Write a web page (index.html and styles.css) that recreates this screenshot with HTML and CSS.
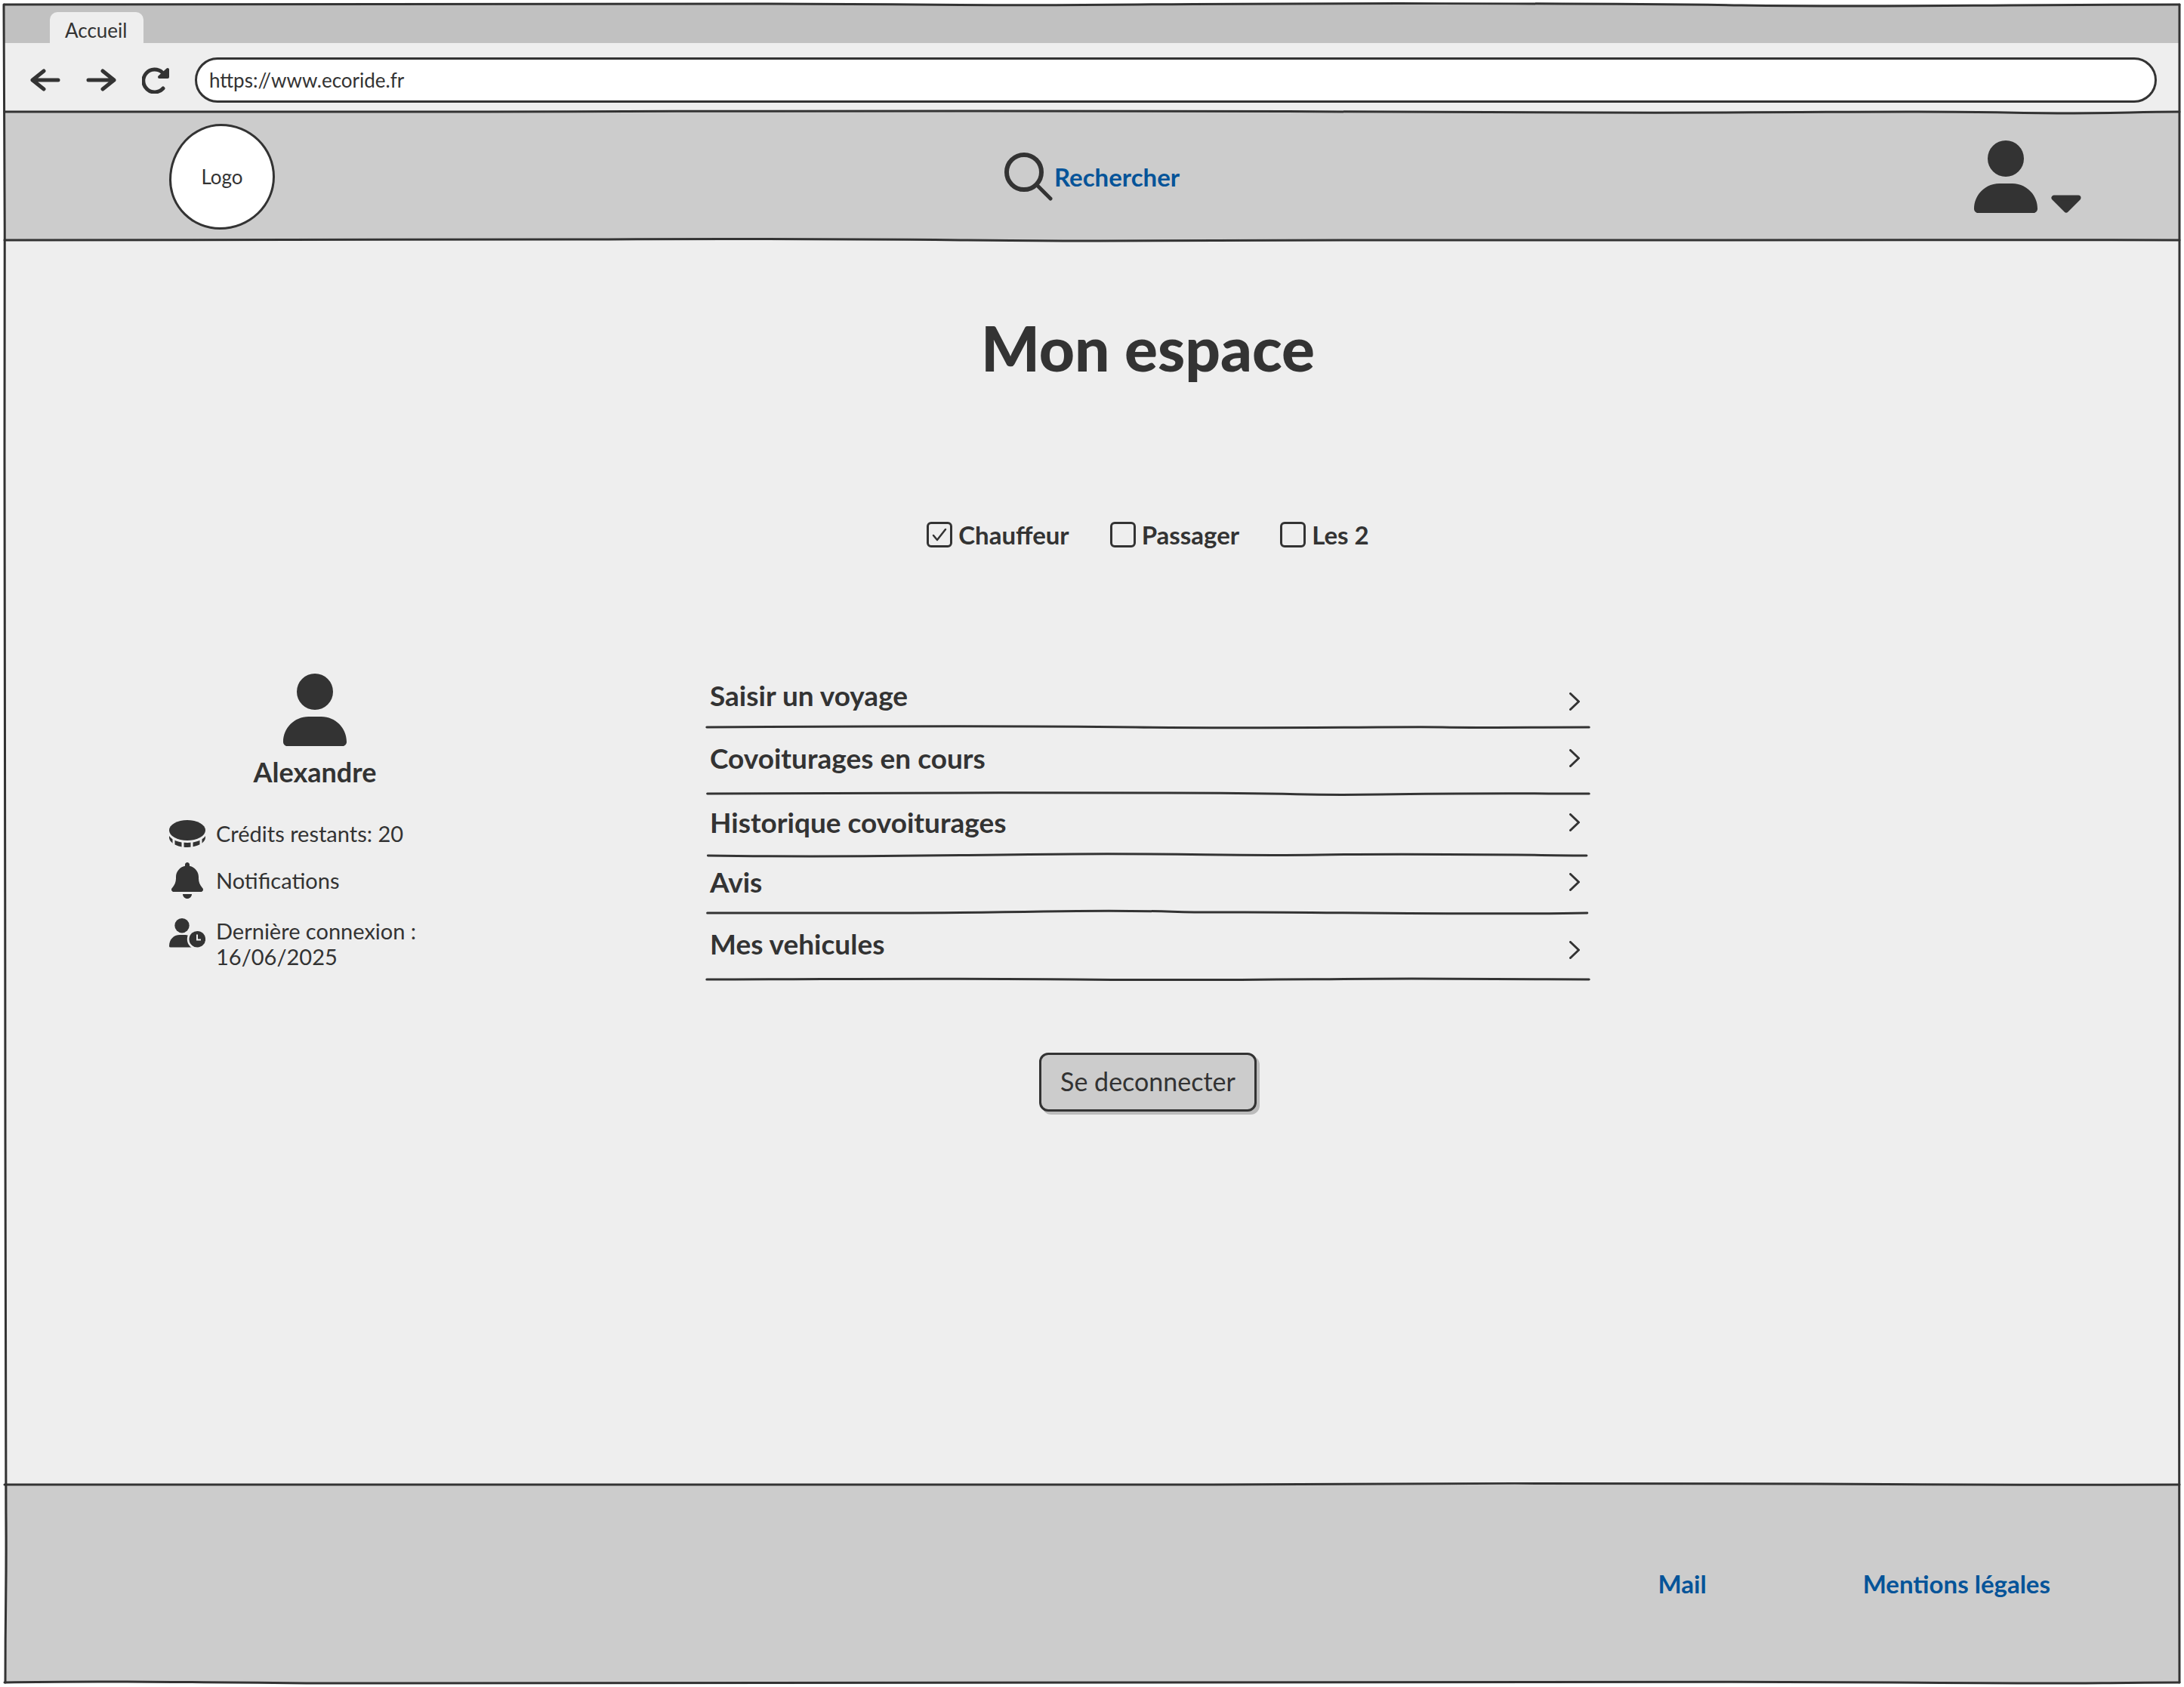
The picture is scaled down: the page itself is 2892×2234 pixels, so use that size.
FILE: index.html
```html
<!DOCTYPE html>
<html lang="fr">
<head>
<meta charset="utf-8">
<title>Mon espace</title>
<link rel="stylesheet" href="styles.css">
</head>
<body>
<svg class="defs" aria-hidden="true">
  <symbol id="user" viewBox="0 0 448 512"><path d="M224 256A128 128 0 1 0 224 0a128 128 0 1 0 0 256zm-45.700 48C79.800 304 0 383.800 0 482.300C0 498.700 13.300 512 29.700 512H418.300c16.400 0 29.700-13.300 29.700-29.700C448 383.800 368.200 304 269.700 304H178.300z"/></symbol>
  <symbol id="chevron" viewBox="0 0 14 24"><path d="M1.500 1.500L12.500 12L1.500 22.500" fill="none" stroke="currentColor" stroke-width="3" stroke-linecap="round" stroke-linejoin="round"/></symbol>
</svg>
<div class="window">
  <div class="tabs"><button class="tab" type="button">Accueil</button></div>
  <div class="toolbar">
    <button class="icon-button" type="button" aria-label="Précédent"><svg width="40" height="30" viewBox="0 0 40 30"><path class="stroke" d="M37 15H3M18 3L3 15L18 27"/></svg></button>
    <button class="icon-button" type="button" aria-label="Suivant"><svg width="40" height="30" viewBox="0 0 40 30"><path class="stroke" d="M3 15H37M22 3L37 15L22 27"/></svg></button>
    <button class="icon-button" type="button" aria-label="Actualiser"><svg width="36" height="36" viewBox="0 0 36 36"><path class="stroke" d="M28 29A15 15 0 1 1 27 8"/><path d="M34 4V14H23Z" stroke="currentColor" stroke-width="4" stroke-linejoin="round"/></svg></button>
    <input class="address" type="text" aria-label="Adresse" value="https://www.ecoride.fr">
  </div>
  <header class="header">
    <svg class="rule rule--top" viewBox="0 0 2880 10" preserveAspectRatio="none"><path d="M0 5C200 7 400 6 640 5S1000 4 1300 4S1800 5 2100 6S2500 3 2650 6S2800 5 2880 5"/></svg>
    <a class="logo" href="#">Logo</a>
    <a class="search" href="#"><svg width="64" height="64" viewBox="0 0 64 64"><circle class="ring" cx="26" cy="26" r="23"/><path class="stroke" d="M44 44L61 61"/></svg>Rechercher</a>
    <button class="icon-button account" type="button" aria-label="Compte"><svg width="84" height="96"><use href="#user"/></svg><svg width="40" height="24" viewBox="0 0 40 24"><path d="M4 4H36L20 20Z" stroke="currentColor" stroke-width="7" stroke-linejoin="round"/></svg></button>
    <svg class="rule rule--bottom" viewBox="0 0 2880 10" preserveAspectRatio="none"><path d="M0 5C200 3 500 6 800 4S1300 6 1450 6S1900 4 2100 5S2600 4 2880 5"/></svg>
  </header>
  <main class="main">
    <h1 class="title">Mon espace</h1>
    <div class="roles">
      <label class="role"><input type="checkbox" checked>Chauffeur</label>
      <label class="role"><input type="checkbox">Passager</label>
      <label class="role"><input type="checkbox">Les 2</label>
    </div>
    <aside class="profile">
      <div class="identity"><svg width="84" height="96"><use href="#user"/></svg><strong class="name">Alexandre</strong></div>
      <ul class="facts">
        <li class="fact"><svg width="48" height="36" viewBox="0 0 48 36"><ellipse cx="24" cy="13.500" rx="24" ry="13.500"/><path d="M0 21C4 27 14 30 24 30S44 27 48 21V23C48 30 37 36 24 36S0 30 0 23Z"/><path class="cut" d="M6 24V36M18 28V37M30 28V37M42 24V36"/></svg>Crédits restants: 20</li>
        <li class="fact"><svg width="48" height="48" viewBox="-32 0 512 512"><path d="M224 0c-17.700 0-32 14.300-32 32V51.200C119 66 64 130.600 64 208v18.800c0 47-17.300 92.400-48.500 127.600l-7.400 8.300c-8.400 9.400-10.400 22.900-5.300 34.400S19.400 416 32 416H416c12.600 0 24-7.400 29.200-18.900s3.100-25-5.300-34.400l-7.400-8.300C401.300 319.200 384 273.900 384 226.800V208c0-77.400-55-142-128-156.800V32c0-17.700-14.300-32-32-32zm45.300 493.300c12-12 18.700-28.300 18.700-45.300H160c0 17 6.700 33.300 18.700 45.300s28.300 18.700 45.300 18.700s33.300-6.700 45.300-18.700z"/></svg>Notifications</li>
        <li class="fact fact--top"><svg width="48" height="39" viewBox="0 0 48 39"><circle cx="17" cy="9.700" r="9.700"/><path d="M0 37C0 28 6 22 14 22H20C26 22 34 26 34 36V38.500H2Q0 38.500 0 37Z"/><circle class="cut" cx="37.300" cy="27.700" r="12"/><circle cx="37.300" cy="27.700" r="10.800"/><path class="hand" d="M37 21.500V28.500H42"/></svg><span>Dernière connexion :<br>16/06/2025</span></li>
      </ul>
    </aside>
    <div class="content">
      <nav>
        <ul class="menu">
          <li class="item item--first item--low"><a href="#">Saisir un voyage<svg width="14" height="24"><use href="#chevron"/></svg></a><svg class="rule rule--bottom" viewBox="0 0 2880 10" preserveAspectRatio="none"><path d="M2 5C400 4 1000 3 1400 5S2300 4 2400 5S2700 5 2878 5"/></svg></li>
          <li class="item item--tall"><a href="#">Covoiturages en cours<svg width="14" height="24"><use href="#chevron"/></svg></a><svg class="rule rule--bottom" viewBox="0 0 2880 10" preserveAspectRatio="none"><path d="M4 5C300 3 1000 4 1500 4S1900 8 2200 6S2700 5 2878 5"/></svg></li>
          <li class="item"><a href="#">Historique covoiturages<svg width="14" height="24"><use href="#chevron"/></svg></a><svg class="rule rule--bottom" viewBox="0 0 2880 10" preserveAspectRatio="none"><path d="M6 5C500 8 800 4 1200 3S1700 6 2000 4S2600 4 2870 5"/></svg></li>
          <li class="item item--short"><a href="#">Avis<svg width="14" height="24"><use href="#chevron"/></svg></a><svg class="rule rule--bottom" viewBox="0 0 2880 10" preserveAspectRatio="none"><path d="M4 5C400 5 700 6 1100 3S1500 5 1700 4S2500 8 2872 5"/></svg></li>
          <li class="item item--tall item--low"><a href="#">Mes vehicules<svg width="14" height="24"><use href="#chevron"/></svg></a><svg class="rule rule--bottom" viewBox="0 0 2880 10" preserveAspectRatio="none"><path d="M2 5C400 5 700 3 1200 5S2000 4 2300 4S2700 5 2878 5"/></svg></li>
        </ul>
      </nav>
      <button class="logout" type="button">Se deconnecter</button>
    </div>
  </main>
  <footer class="footer">
    <svg class="rule rule--top" viewBox="0 0 2880 10" preserveAspectRatio="none"><path d="M0 5C300 7 500 3 800 5S1400 7 1600 5S2200 3 2400 4S2700 6 2880 5"/></svg>
    <a href="#">Mail</a>
    <a href="#">Mentions légales</a>
  </footer>
  <svg class="rule rule--top" viewBox="0 0 2880 10" preserveAspectRatio="none"><path d="M0 5C300 6 700 3 1000 4S1300 7 1500 5S2100 3 2300 6S2600 5 2880 5"/></svg>
  <svg class="rule rule--bottom" viewBox="0 0 2880 10" preserveAspectRatio="none"><path d="M0 5C100 3 200 4 400 6S1000 4 1500 5S2200 3 2500 5S2700 6 2880 5"/></svg>
  <svg class="side side--left" viewBox="0 0 10 2224" preserveAspectRatio="none"><path d="M4 0C6 200 5 400 5 600S6 1200 6 1500S6 1900 7 2000S6 2100 6 2224"/></svg>
  <svg class="side side--right" viewBox="0 0 10 2224" preserveAspectRatio="none"><path d="M5 0C6 200 5 500 5 800S6 1200 5 1500S5 1900 5 2224"/></svg>
</div>
</body>
</html>
```
FILE: styles.css
```css
:root {
  --ink: #333;
  --paper: #eee;
  --bar: #ccc;
  --link: #055499;
}

* { box-sizing: border-box; }

body {
  margin: 0;
  padding: 6px;
  background: #fff;
  color: var(--ink);
  font-family: Lato, sans-serif;
  font-size: 29px;
  line-height: 34px;
}

button, input { font: inherit; color: inherit; }
a { color: inherit; text-decoration: none; }
ul { margin: 0; padding: 0; list-style: none; }
svg { display: block; flex: none; fill: currentColor; }
.defs { position: absolute; width: 0; height: 0; }

.window {
  position: relative;
  display: flex;
  flex-direction: column;
  min-height: calc(100vh - 12px);
  background: var(--paper);
}

/* Hand-drawn strokes laid over the section edges */
.rule, .side {
  position: absolute;
  overflow: visible;
  fill: none;
  stroke: var(--ink);
  stroke-width: 3px;
  stroke-linecap: round;
  pointer-events: none;
}
.rule path, .side path { vector-effect: non-scaling-stroke; }
.rule { left: 0; width: 100%; height: 10px; }
.rule--top { top: -5px; }
.rule--bottom { bottom: -5px; }
.side { top: 0; width: 10px; height: 100%; }
.side--left { left: -5px; }
.side--right { right: -5px; }

.stroke, .ring {
  fill: none;
  stroke: currentColor;
  stroke-width: 5px;
  stroke-linecap: round;
  stroke-linejoin: round;
}
.ring { stroke-width: 6px; }
.cut { fill: none; stroke: var(--paper); stroke-width: 3px; }
.hand { fill: none; stroke: var(--paper); stroke-width: 2px; }

.tabs {
  display: flex;
  align-items: flex-end;
  height: 51px;
  padding-left: 60px;
  background: #c1c1c1;
}
.tab {
  height: 41px;
  padding: 6px 22px 0 20px;
  border: 0;
  border-radius: 10px 10px 0 0;
  background: var(--paper);
  font-size: 26px;
  line-height: 34px;
}

.toolbar {
  display: flex;
  align-items: center;
  gap: 34px;
  height: 91px;
  padding: 6px 30px 0 34px;
}
.icon-button {
  flex: none;
  padding: 0;
  border: 0;
  background: none;
}
.address {
  flex: 1;
  min-width: 0;
  height: 60px;
  padding: 0 16px;
  border: 3px solid var(--ink);
  border-radius: 30px;
  background: #fff;
  font-size: 26px;
}

.header {
  position: relative;
  display: grid;
  grid-template-columns: 1fr auto 1fr;
  align-items: center;
  height: 170px;
  padding-top: 2px;
  background: var(--bar);
}
.logo {
  display: grid;
  place-items: center;
  width: 140px;
  height: 140px;
  margin-left: 218px;
  border: 3px solid var(--ink);
  border-radius: 49% 51% 52% 48% / 53% 50% 50% 47%;
  background: #fff;
  font-size: 26px;
}
.search {
  display: flex;
  align-items: center;
  gap: 2px;
  color: var(--link);
  font-size: 33px;
  font-weight: 700;
}
.search svg { color: var(--ink); }
.account {
  display: flex;
  align-items: flex-end;
  justify-self: end;
  gap: 18px;
  margin-right: 130px;
}

.main {
  flex: 1;
  display: grid;
  grid-template-columns: 929fr 1170fr 781fr;
  grid-template-rows: auto auto 1fr;
  padding-top: 94px;
}
.title {
  grid-column: 2;
  margin: 0;
  font-size: 82px;
  font-weight: 900;
  line-height: 96px;
  text-align: center;
}
.roles {
  grid-column: 2;
  display: flex;
  justify-content: center;
  gap: 54px;
  margin-top: 180px;
  font-size: 33px;
  font-weight: 700;
  line-height: 40px;
}
.role { display: flex; align-items: center; gap: 8px; }
.role input {
  appearance: none;
  width: 34px;
  height: 34px;
  margin: 0;
  border: 3px solid var(--ink);
  border-radius: 6px;
}
.role input:checked {
  background: url("data:image/svg+xml,%3Csvg xmlns='http://www.w3.org/2000/svg' viewBox='0 0 28 28'%3E%3Cpath d='M6 15L11 21L22 7' fill='none' stroke='%23333' stroke-width='2.500' stroke-linecap='round' stroke-linejoin='round'/%3E%3C/svg%3E") center / 28px 28px no-repeat;
}

.profile { grid-column: 1; padding: 164px 0 0 218px; }
.identity {
  display: flex;
  flex-direction: column;
  align-items: center;
  gap: 12px;
  width: 386px;
}
.name { font-size: 36px; line-height: 44px; }
.facts {
  display: flex;
  flex-direction: column;
  gap: 20px;
  margin-top: 42px;
}
.fact { display: flex; align-items: center; gap: 14px; }
.fact--top { align-items: flex-start; padding-top: 6px; }

.content {
  grid-column: 2;
  display: flex;
  flex-direction: column;
  align-items: center;
  padding-top: 155px;
}
nav { width: 100%; }
.item { position: relative; height: 82px; padding-bottom: 6px; }
.item--first { height: 80px; padding-bottom: 4px; }
.item--short { height: 76px; }
.item--tall { height: 88px; }
.item a {
  display: flex;
  align-items: center;
  justify-content: space-between;
  height: 100%;
  padding: 0 13px 0 5px;
  font-size: 37px;
  font-weight: 700;
}
.item--low svg:not(.rule) { margin-top: 16px; }

.logout {
  margin-top: 97px;
  padding: 15px 25px 17px;
  border: 3px solid var(--ink);
  border-radius: 12px;
  background: var(--bar);
  box-shadow: 4px 4px 0 #bbb;
  font-size: 34px;
  line-height: 40px;
}

.footer {
  position: relative;
  display: flex;
  align-items: center;
  justify-content: flex-end;
  gap: 207px;
  height: 262px;
  padding-right: 171px;
  background: var(--bar);
  color: var(--link);
  font-size: 33px;
  font-weight: 700;
}
```
